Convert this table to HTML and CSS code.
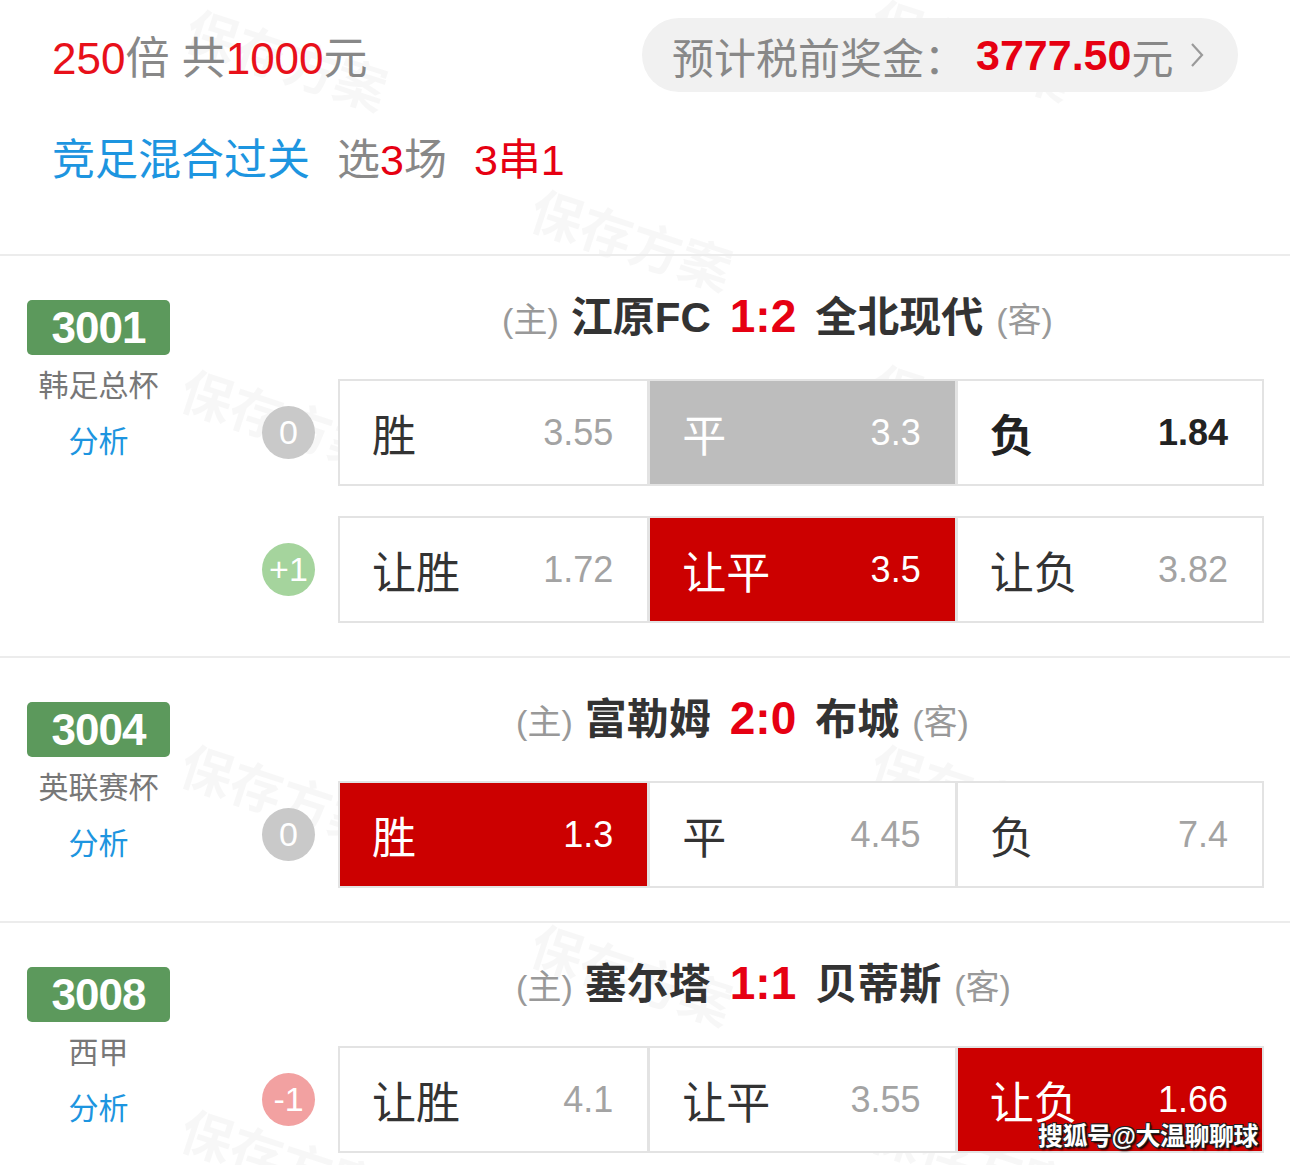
FILE: index.html
```html
<!DOCTYPE html>
<html lang="zh-CN">
<head>
    <meta charset="UTF-8">
    <title>方案详情</title>
    <link rel="stylesheet" href="styles.css">
</head>
<body>
    <div class="page">
        <div class="marks">
            <span class="mark" style="left:200px;top:-10px">保存方案</span>
            <span class="mark" style="left:885px;top:-20px">保存方案</span>
            <span class="mark" style="left:545px;top:170px">保存方案</span>
            <span class="mark" style="left:195px;top:350px">保存方案</span>
            <span class="mark" style="left:885px;top:345px">保存方案</span>
            <span class="mark" style="left:195px;top:725px">保存方案</span>
            <span class="mark" style="left:885px;top:725px">保存方案</span>
            <span class="mark" style="left:545px;top:905px">保存方案</span>
            <span class="mark" style="left:195px;top:1090px">保存方案</span>
            <span class="mark" style="left:885px;top:1090px">保存方案</span>
        </div>

        <header class="summary">
            <div class="summary-top">
                <div class="stake"><em>250</em>倍 共<em>1000</em>元</div>
                <a class="prize">预计税前奖金：<b>3777.50</b>元
                    <svg class="chev" width="16" height="28" viewBox="0 0 16 28"><polyline points="3,3 13,14 3,25" fill="none" stroke="#9a9a9a" stroke-width="2.2"/></svg>
                </a>
            </div>
            <div class="play">
                <span class="play-type">竞足混合过关</span>
                <span class="play-pick">选<em>3</em>场</span>
                <span class="play-pass">3串1</span>
            </div>
        </header>

        <section class="match">
            <div class="side">
                <div class="code">3001</div>
                <div class="league">韩足总杯</div>
                <div class="analysis">分析</div>
            </div>
            <div class="body">
                <div class="teams">
                    <div class="home"><span class="tag">(主)</span><span class="team">江原FC</span></div>
                    <div class="score">1:2</div>
                    <div class="away"><span class="team">全北现代</span><span class="tag">(客)</span></div>
                </div>
                <div class="line">
                    <div class="hc hc-even">0</div>
                    <div class="odds">
                        <div class="cell"><span class="label">胜</span><span class="odd">3.55</span></div>
                        <div class="cell pick-gray"><span class="label">平</span><span class="odd">3.3</span></div>
                        <div class="cell hit"><span class="label">负</span><span class="odd">1.84</span></div>
                    </div>
                </div>
                <div class="line">
                    <div class="hc hc-plus">+1</div>
                    <div class="odds">
                        <div class="cell"><span class="label">让胜</span><span class="odd">1.72</span></div>
                        <div class="cell pick-red"><span class="label">让平</span><span class="odd">3.5</span></div>
                        <div class="cell"><span class="label">让负</span><span class="odd">3.82</span></div>
                    </div>
                </div>
            </div>
        </section>

        <section class="match">
            <div class="side">
                <div class="code">3004</div>
                <div class="league">英联赛杯</div>
                <div class="analysis">分析</div>
            </div>
            <div class="body">
                <div class="teams">
                    <div class="home"><span class="tag">(主)</span><span class="team">富勒姆</span></div>
                    <div class="score">2:0</div>
                    <div class="away"><span class="team">布城</span><span class="tag">(客)</span></div>
                </div>
                <div class="line">
                    <div class="hc hc-even">0</div>
                    <div class="odds">
                        <div class="cell pick-red"><span class="label">胜</span><span class="odd">1.3</span></div>
                        <div class="cell"><span class="label">平</span><span class="odd">4.45</span></div>
                        <div class="cell"><span class="label">负</span><span class="odd">7.4</span></div>
                    </div>
                </div>
            </div>
        </section>

        <section class="match">
            <div class="side">
                <div class="code">3008</div>
                <div class="league">西甲</div>
                <div class="analysis">分析</div>
            </div>
            <div class="body">
                <div class="teams">
                    <div class="home"><span class="tag">(主)</span><span class="team">塞尔塔</span></div>
                    <div class="score">1:1</div>
                    <div class="away"><span class="team">贝蒂斯</span><span class="tag">(客)</span></div>
                </div>
                <div class="line">
                    <div class="hc hc-minus">-1</div>
                    <div class="odds">
                        <div class="cell"><span class="label">让胜</span><span class="odd">4.1</span></div>
                        <div class="cell"><span class="label">让平</span><span class="odd">3.55</span></div>
                        <div class="cell pick-red"><span class="label">让负</span><span class="odd">1.66</span></div>
                    </div>
                </div>
            </div>
        </section>

        <div class="sohu">搜狐号@大温聊聊球</div>
    </div>
</body>
</html>
```

FILE: styles.css
```css
* {
    box-sizing: border-box;
}

body {
    margin: 0;
    background: #fff;
    font-family: "Liberation Sans", "Noto Sans CJK SC", sans-serif;
    color: #333;
}

em {
    font-style: normal;
}

.page {
    position: relative;
    z-index: 0;
    width: 1290px;
    height: 1165px;
    overflow: hidden;
}

/* 背景水印 */
.marks {
    position: absolute;
    inset: 0;
    z-index: -1;
}

.mark {
    position: absolute;
    font-size: 52px;
    font-weight: bold;
    color: rgba(0, 0, 0, 0.03);
    transform: rotate(18deg);
    transform-origin: left top;
    white-space: nowrap;
}

/* 顶部汇总 */
.summary {
    height: 256px;
    padding: 18px 52px 0;
    border-bottom: 2px solid #ececec;
}

.summary-top {
    display: flex;
    justify-content: space-between;
    align-items: center;
}

.stake {
    font-size: 44px;
    color: #888;
}

.stake em {
    color: #e8101a;
}

.prize {
    display: flex;
    align-items: center;
    width: 596px;
    height: 74px;
    padding: 0 28px 0 30px;
    border-radius: 37px;
    background: #f1f1f1;
    font-size: 42px;
    color: #888;
}

.prize b {
    margin-left: 10px;
    font-size: 43px;
    color: #e60012;
}

.chev {
    margin-left: 16px;
}

.play {
    display: flex;
    gap: 27px;
    margin-top: 43px;
    font-size: 43px;
    line-height: 50px;
}

.play-type {
    color: #1d95e0;
}

.play-pick {
    color: #888;
}

.play-pick em,
.play-pass {
    color: #e60012;
}

/* 比赛 */
.match {
    display: flex;
    padding: 44px 26px 33px 27px;
    border-bottom: 2px solid #ececec;
}

.side {
    display: flex;
    flex-direction: column;
    align-items: center;
    width: 143px;
}

.code {
    width: 143px;
    height: 55px;
    border-radius: 5px;
    background: #5c995c;
    color: #fff;
    font-size: 44px;
    font-weight: bold;
    line-height: 55px;
    text-align: center;
    letter-spacing: -1px;
}

.league {
    margin-top: 11px;
    font-size: 30px;
    line-height: 40px;
    color: #777;
}

.analysis {
    margin-top: 16px;
    font-size: 30px;
    line-height: 40px;
    color: #1d95e0;
}

.body {
    flex: 1;
    margin-left: 92px;
}

.teams {
    display: grid;
    grid-template-columns: 1fr auto 1fr;
    column-gap: 19px;
    align-items: baseline;
    height: 40px;
    margin: -4px 0 43px;
    line-height: 40px;
    white-space: nowrap;
}

.home {
    justify-self: end;
}

.away {
    justify-self: start;
}

.tag {
    font-size: 34px;
    color: #999;
}

.home .tag {
    margin-right: 12px;
}

.away .tag {
    margin-left: 13px;
}

.team {
    font-size: 42px;
    font-weight: bold;
    color: #333;
}

.score {
    font-size: 46px;
    font-weight: bold;
    color: #e60012;
}

.line {
    display: flex;
    align-items: center;
    gap: 23px;
}

.line + .line {
    margin-top: 30px;
}

.hc {
    display: flex;
    align-items: center;
    justify-content: center;
    flex-shrink: 0;
    width: 53px;
    height: 53px;
    border-radius: 50%;
    color: #fff;
    font-size: 34px;
}

.hc-even {
    background: #c9c9c9;
}

.hc-plus {
    background: #a5d49d;
}

.hc-minus {
    background: #f2a1a1;
}

.odds {
    flex: 1;
    display: grid;
    grid-template-columns: repeat(3, 1fr);
    height: 107px;
    border: 2px solid #e3e3e3;
}

.cell {
    display: flex;
    align-items: center;
    justify-content: space-between;
    padding: 0 34px 0 32px;
    border-left: 3px solid #e3e3e3;
    background: #fff;
}

.cell:first-child {
    border-left: 0;
}

.label {
    font-size: 44px;
    color: #333;
}

.odd {
    font-size: 36px;
    color: #a3a3a3;
}

.cell.hit .label,
.cell.hit .odd {
    font-weight: bold;
    color: #222;
}

.cell.pick-red {
    background: #cc0000;
}

.cell.pick-gray {
    background: #bdbdbd;
}

.cell.pick-red .label,
.cell.pick-red .odd,
.cell.pick-gray .label,
.cell.pick-gray .odd {
    color: #fff;
}

.sohu {
    position: absolute;
    right: 32px;
    bottom: 14px;
    font-size: 25px;
    font-weight: bold;
    line-height: 30px;
    letter-spacing: -0.5px;
    color: #fff;
    text-shadow: 1px 1px 0 #222, -1px -1px 0 #222, 1px -1px 0 #222, -1px 1px 0 #222, 2px 2px 2px #000;
}
```
